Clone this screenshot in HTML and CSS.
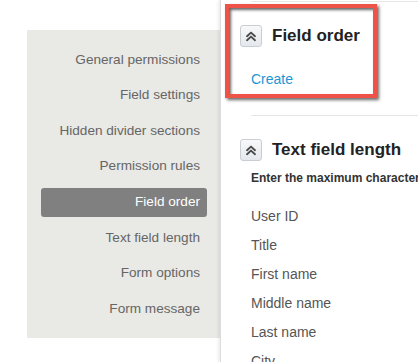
FILE: index.html
```html
<!DOCTYPE html>
<html>
<head>
<meta charset="utf-8">
<link rel="stylesheet" href="styles.css">
</head>
<body>
<div class="page">
  <nav class="sidebar">
    <a class="nav-item">General permissions</a>
    <a class="nav-item">Field settings</a>
    <a class="nav-item">Hidden divider sections</a>
    <a class="nav-item">Permission rules</a>
    <a class="nav-item active">Field order</a>
    <a class="nav-item">Text field length</a>
    <a class="nav-item">Form options</a>
    <a class="nav-item">Form message</a>
  </nav>
  <main class="main">
    <section class="section first">
      <div class="section-head">
        <span class="toggle"><svg width="22" height="22" viewBox="0 0 22 22"><path d="M7 11.2 L11 7.6 L15 11.2 M7 15.2 L11 11.6 L15 15.2" fill="none" stroke="#4a4a4a" stroke-width="1.9" stroke-linecap="round" stroke-linejoin="round"/></svg></span>
        <h2 class="section-title">Field order</h2>
      </div>
      <a class="link">Create</a>
    </section>
    <section class="section second">
      <div class="section-head">
        <span class="toggle"><svg width="22" height="22" viewBox="0 0 22 22"><path d="M7 11.2 L11 7.6 L15 11.2 M7 15.2 L11 11.6 L15 15.2" fill="none" stroke="#4a4a4a" stroke-width="1.9" stroke-linecap="round" stroke-linejoin="round"/></svg></span>
        <h2 class="section-title">Text field length</h2>
      </div>
      <p class="hint">Enter the maximum characters allowed for each text field</p>
      <ul class="fields">
        <li>User ID</li>
        <li>Title</li>
        <li>First name</li>
        <li>Middle name</li>
        <li>Last name</li>
        <li>City</li>
      </ul>
    </section>
    <div class="highlight"></div>
  </main>
</div>
</body>
</html>
```

FILE: styles.css
```css
* { box-sizing: border-box; }
html, body {
  margin: 0;
  padding: 0;
  background: #fff;
  overflow: hidden;
  width: 418px;
  height: 362px;
}
body {
  font-family: "Liberation Sans", Arial, sans-serif;
}
.page {
  display: flex;
  align-items: flex-start;
  height: 362px;
}
.sidebar {
  margin-left: 27px;
  margin-top: 29.5px;
  width: 193px;
  background: #e9e9e5;
  padding: 16px 13px 14.3px 14px;
  display: flex;
  flex-direction: column;
  gap: 6.67px;
  flex: none;
}
.nav-item {
  display: block;
  text-align: right;
  font-size: 13.6px;
  line-height: 20px;
  padding: 4px 7px 5px 7px;
  color: #666;
  border-radius: 3px;
  white-space: nowrap;
}
.nav-item.active {
  background: #808080;
  color: #fff;
}
.main {
  position: relative;
  flex: 1;
  align-self: stretch;
  border-left: 1px solid #dcdcdc;
  box-shadow: -2px 0 3px rgba(0,0,0,0.07);
  padding-top: 1px;
  padding-left: 30px;
  min-width: 0;
}
.section {
  border-top: 1px solid #e6e6e6;
  padding-top: 23px;
  white-space: nowrap;
}
.section.first { padding-bottom: 26px; }
.section-head {
  display: flex;
  align-items: center;
  gap: 10px;
  margin-left: -11px;
  height: 22px;
}
.toggle {
  width: 22px;
  height: 22px;
  flex: none;
  border: 1px solid #c9ced3;
  border-radius: 3px;
  background: linear-gradient(#f7f8fa, #e4e8ec);
  display: flex;
  align-items: center;
  justify-content: center;
}
.toggle svg { display: block; margin: -1px; }
.section-title {
  margin: 0;
  font-size: 17px;
  font-weight: bold;
  color: #222;
  line-height: 22px;
}
.link {
  display: block;
  margin-top: 22px;
  font-size: 14px;
  line-height: 20px;
  color: #1c97d3;
}
.hint {
  margin: 9.4px 0 0 0;
  font-size: 12px;
  line-height: 16px;
  font-weight: bold;
  color: #333;
}
.fields {
  list-style: none;
  margin: 15.3px 0 0 0;
  padding: 0;
}
.fields li {
  font-size: 14px;
  line-height: 29px;
  color: #555;
}
.highlight {
  position: absolute;
  left: 4px;
  top: 4px;
  width: 152px;
  height: 94px;
  border: 4px solid #ef5246;
  box-shadow: 2px 2px 3px rgba(0,0,0,0.6), inset 2px 2px 3px rgba(0,0,0,0.6);
}
```
